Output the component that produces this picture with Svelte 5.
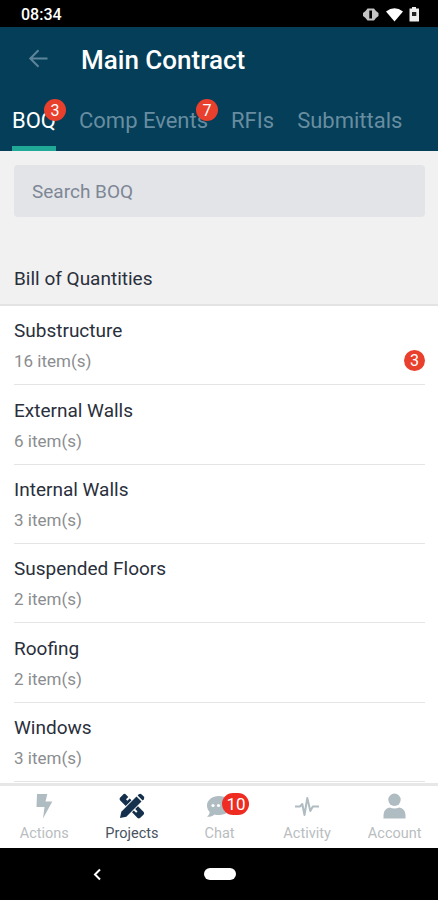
<script>
  let activeTab = 'BOQ';
  let activeNav = 'Projects';
  let query = '';

  const tabs = [
    { name: 'BOQ', count: 3 },
    { name: 'Comp Events', count: 7 },
    { name: 'RFIs' },
    { name: 'Submittals' },
  ];

  const sections = [
    { name: 'Substructure', items: 16, alerts: 3 },
    { name: 'External Walls', items: 6 },
    { name: 'Internal Walls', items: 3 },
    { name: 'Suspended Floors', items: 2 },
    { name: 'Roofing', items: 2 },
    { name: 'Windows', items: 3 },
  ];

  const nav = ['Actions', 'Projects', 'Chat', 'Activity', 'Account'];

  $: visible = sections.filter(s => s.name.toLowerCase().includes(query.toLowerCase()));
</script>

<div class="phone">
  <div class="status">
    <span class="time">08:34</span>
    <svg width="58" height="18" viewBox="0 0 58 18">
      <path d="M5.500 3.500H12l2 2.500 2.500 2v3L14 13l-2 2.500H5.500l-2-2.500L1 11V8l2.500-2z" fill="#c4c4c4" />
      <path d="M7.300 5.500H10v8H7.300z" fill="#000" />
      <path d="M24 6.500q8.500-6.500 17 0L32.500 16.500z" fill="#fff" />
      <path d="M50 2h4v1.500h3v13H47.500v-13H50z" fill="#eee" />
      <path d="M50 7h4.300v4H50z" fill="#222" />
    </svg>
  </div>

  <header>
    <div class="title">
      <button class="back" aria-label="Back">
        <svg width="20" height="20" viewBox="0 0 20 20" fill="none" stroke="#5d8599" stroke-width="2">
          <path d="M19.500 9.500H3M10.500 1.300L2.300 9.500l8.200 8.200" />
        </svg>
      </button>
      <h1>Main Contract</h1>
    </div>
    <nav class="tabs">
      {#each tabs as tab}
        <button class="tab" class:active={activeTab === tab.name} on:click={() => (activeTab = tab.name)}>
          {tab.name}
          {#if tab.count}
            <span class="badge">{tab.count}</span>
          {/if}
        </button>
      {/each}
    </nav>
  </header>

  <div class="search">
    <input placeholder="Search BOQ" bind:value={query} />
  </div>
  <h2>Bill of Quantities</h2>

  <ul>
    {#each visible as section (section.name)}
      <li>
        <div>
          <p class="name">{section.name}</p>
          <p class="items">{section.items} item(s)</p>
        </div>
        {#if section.alerts}
          <span class="badge">{section.alerts}</span>
        {/if}
      </li>
    {/each}
  </ul>

  <nav class="bottom">
    {#each nav as name}
      <button class:active={activeNav === name} on:click={() => (activeNav = name)}>
        <span class="icon">
          <svg width="26" height="26" viewBox="0 0 26 26" fill="currentColor">
            {#if name === 'Actions'}
              <path d="M6 1h10.300l-1.800 7.500h6.800L12 25.500l1.500-11.500H5.500z" />
            {:else if name === 'Projects'}
              <path d="M1 25l1.300-6.300L17.500 3.500l5 5L7.300 23.700z" />
              <path d="M18.600 2.400l1.200-1.200q1.400-1 2.600 0l2.400 2.400q1 1.300 0 2.600l-1.200 1.200z" />
              <path d="M6.300 1l3 3-2.300 2.300 1.400 1.400 2.300-2.300 1.800 1.800-5.800 5.800L1 7.300q-1-1.300 0-2.600L4.700 1q.8-.6 1.600 0z" />
              <path d="M19 13.300l5.700 5.700q.9 1.200 0 2.400L21 25q-1.200.8-2.400 0L13 19.300l1.800-1.800 2.300 2.300 1.400-1.400-2.300-2.300z" />
            {:else if name === 'Chat'}
              <path d="M13 3C6 3 1 7.200 1 12.500c0 2.600 1.200 4.900 2.700 6.600-.3 2-1.200 3.700-2.700 4.700 3.100.2 5.800-.9 7.500-2.300 1.400.4 2.900.5 4.500.5 7 0 12-4.200 12-9.500S20 3 13 3z" />
              <g fill="#fff">
                <circle cx="7" cy="12.500" r="1.600" />
                <circle cx="12.500" cy="12.500" r="1.600" />
                <circle cx="18" cy="12.500" r="1.600" />
              </g>
            {:else if name === 'Activity'}
              <path
                d="M1 13.500h5l2.300-2.500 2.200 11L13.300 5l3 13 2.500-4.500H25"
                fill="none"
                stroke="currentColor"
                stroke-width="2"
                stroke-linejoin="round"
              />
            {:else}
              <circle cx="12.500" cy="6.800" r="6.200" />
              <path d="M1.500 25.500V22q0-6 6-7.500 5 2.200 10 0 6 1.500 6 7.500v3.500z" />
            {/if}
          </svg>
          {#if name === 'Chat'}
            <span class="badge wide">10</span>
          {/if}
        </span>
        {name}
      </button>
    {/each}
  </nav>

  <div class="system">
    <svg width="9" height="13" viewBox="0 0 9 13" fill="none" stroke="#fff" stroke-width="2">
      <path d="M7 1.500l-5 5 5 5" />
    </svg>
    <span class="home"></span>
  </div>
</div>

<style>
  :global(body) {
    margin: 0;
    background: #000;
  }

  .phone {
    display: flex;
    flex-direction: column;
    width: 438px;
    height: 900px;
    overflow: hidden;
    background: #f1f1f1;
    font-family: Roboto, 'Liberation Sans', sans-serif;
  }

  button {
    border: 0;
    padding: 0;
    background: none;
    font: inherit;
    cursor: pointer;
  }

  h1, h2, p, ul {
    margin: 0;
    padding: 0;
  }

  .status {
    display: flex;
    flex: none;
    justify-content: space-between;
    align-items: center;
    height: 27px;
    padding: 0 18px 0 21px;
    box-sizing: border-box;
    background: #000;
  }

  .time {
    padding-top: 2px;
    color: #fff;
    font-size: 16px;
    font-weight: 500;
  }

  header {
    flex: none;
    height: 124px;
    background: #043e58;
  }

  .title {
    display: flex;
    align-items: center;
    height: 62px;
    padding: 1px 0 0 28px;
    box-sizing: border-box;
  }

  .back {
    display: flex;
    width: 53px;
  }

  h1 {
    padding-top: 3px;
    color: #fff;
    font-size: 26px;
    font-weight: 500;
  }

  .tabs {
    display: flex;
    gap: 23px;
    height: 62px;
    padding-left: 12px;
  }

  .tab {
    position: relative;
    padding-top: 5px;
    border-bottom: 5px solid transparent;
    color: #688da0;
    font-size: 22px;
    white-space: nowrap;
  }

  .tab.active {
    border-color: #20a997;
    color: #fff;
  }

  .badge {
    display: flex;
    flex: none;
    justify-content: center;
    align-items: center;
    width: 21px;
    height: 21px;
    border-radius: 11px;
    background: #e93f2d;
    color: #fff;
    font-size: 16px;
  }

  .tab .badge {
    position: absolute;
    top: 10px;
    right: -10px;
    width: 22px;
    height: 22px;
  }

  .search {
    flex: none;
    padding: 14px 13px 0 14px;
  }

  input {
    display: block;
    width: 100%;
    height: 52px;
    padding: 0 18px;
    box-sizing: border-box;
    border: 0;
    border-radius: 4px;
    background: #e3e4e8;
    font: 19px Roboto, 'Liberation Sans', sans-serif;
  }

  input::placeholder {
    color: #7d8795;
    opacity: 1;
  }

  h2 {
    flex: none;
    height: 89px;
    padding: 50px 14px 0;
    box-sizing: border-box;
    border-bottom: 2px solid #e3e3e3;
    color: #2a2f3c;
    font-size: 19px;
    font-weight: 400;
    line-height: 24px;
  }

  ul {
    flex: 1;
    min-height: 0;
    padding: 0 13px 0 14px;
    overflow: hidden;
    background: #fff;
    list-style: none;
  }

  li {
    display: flex;
    justify-content: space-between;
    align-items: flex-end;
    height: 79.350px;
    padding-bottom: 8px;
    box-sizing: border-box;
    border-bottom: 1px solid #e4e4e4;
  }

  li .badge {
    margin-bottom: 5px;
  }

  .name {
    color: #2a2f3c;
    font-size: 19px;
    line-height: 30px;
  }

  .items {
    color: #8b8d90;
    font-size: 17px;
    line-height: 30px;
  }

  .bottom {
    display: grid;
    grid-template-columns: repeat(5, 1fr);
    flex: none;
    height: 65px;
    border-top: 3px solid #e7e7e7;
    box-sizing: border-box;
    background: #fff;
  }

  .bottom button {
    display: flex;
    flex-direction: column;
    align-items: center;
    gap: 5px;
    padding: 7px 0 0 1px;
    color: #b9bdc0;
    font-size: 14.500px;
    line-height: 20px;
  }

  .bottom .active {
    color: #47535f;
  }

  .icon {
    position: relative;
    display: flex;
    height: 26px;
    color: #afbcc2;
  }

  .active .icon {
    color: #14304c;
  }

  .wide {
    position: absolute;
    top: 0;
    left: 16px;
    width: 27px;
    height: 22px;
    background: #ee2c22;
    font-size: 17px;
  }

  .system {
    display: flex;
    flex: none;
    align-items: center;
    gap: 102px;
    height: 52px;
    padding-left: 93px;
    background: #000;
  }

  .home {
    width: 32px;
    height: 12px;
    border-radius: 6px;
    background: #fff;
  }
</style>
